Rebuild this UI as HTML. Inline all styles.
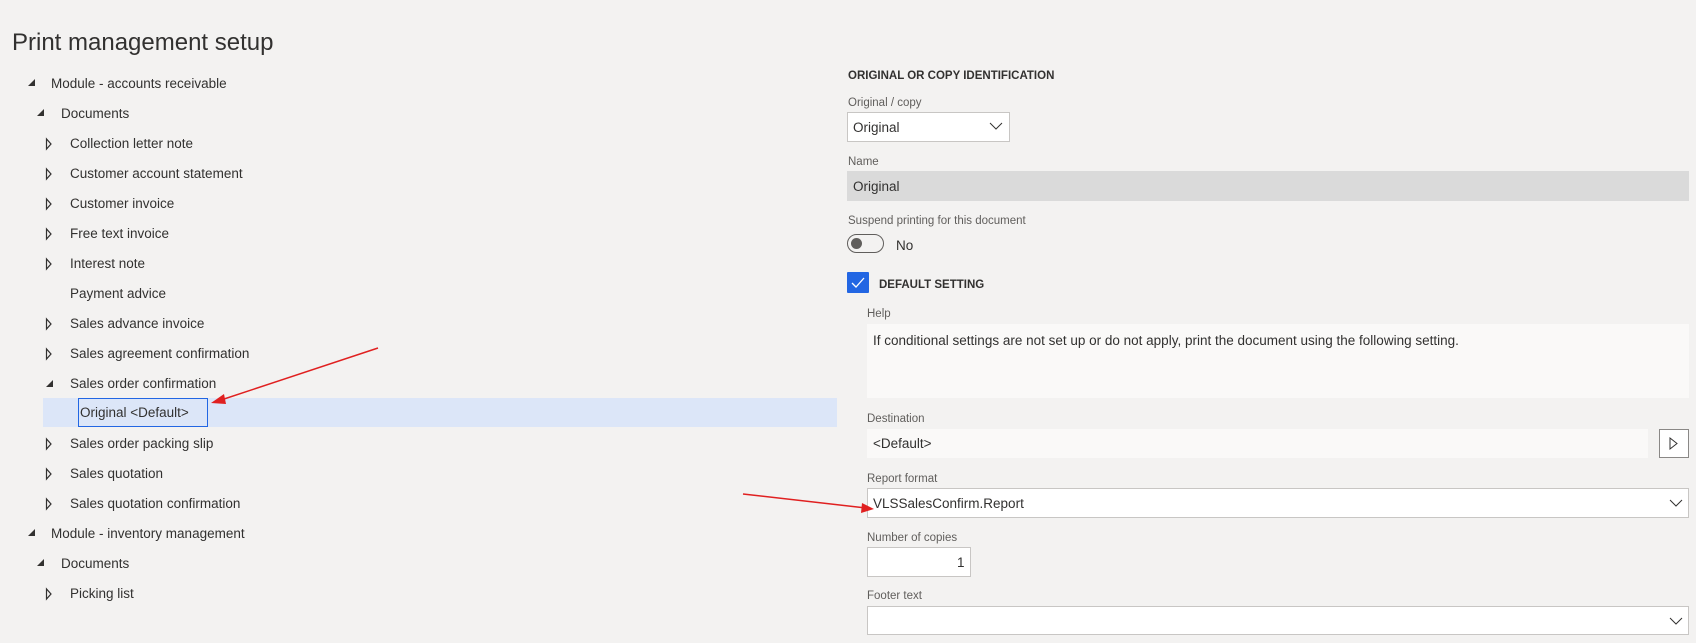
<!DOCTYPE html>
<html><head><meta charset="utf-8"><style>
*{margin:0;padding:0;box-sizing:border-box}
body{width:1696px;height:643px;background:#f3f2f1;font-family:"Liberation Sans",sans-serif;color:#323130;position:relative;overflow:hidden}
.a{position:absolute;white-space:nowrap}
.t{font-size:13.5px;line-height:16px}
.lbl{font-size:11.5px;line-height:14px;color:#605e5c}
.box{position:absolute}
</style></head><body>
<div class="a" style="left:12px;top:29px;font-size:24px;line-height:28px;color:#323130">Print management setup</div>

<svg class="a" style="left:0;top:0" width="900" height="643">
<g fill="#323130">
<polygon points="35,79 28,86 35,86"/>
<polygon points="44,109 37,116 44,116"/>
<polygon points="53,380 46,387 53,387"/>
<polygon points="35,529 28,536 35,536"/>
<polygon points="44,559 37,566 44,566"/>
</g>
<g fill="none" stroke="#323130" stroke-width="1.2">
<polygon points="46.5,139 46.5,149 51,144"/>
<polygon points="46.5,169 46.5,179 51,174"/>
<polygon points="46.5,199 46.5,209 51,204"/>
<polygon points="46.5,229 46.5,239 51,234"/>
<polygon points="46.5,259 46.5,269 51,264"/>
<polygon points="46.5,319 46.5,329 51,324"/>
<polygon points="46.5,349 46.5,359 51,354"/>
<polygon points="46.5,439 46.5,449 51,444"/>
<polygon points="46.5,469 46.5,479 51,474"/>
<polygon points="46.5,499 46.5,509 51,504"/>
<polygon points="46.5,589 46.5,599 51,594"/>
</g>
</svg>
<div class="box" style="left:43px;top:398px;width:794px;height:29px;background:#dce6f8"></div>
<div class="box" style="left:78px;top:398px;width:130px;height:29px;border:1px solid #2266e3"></div>
<div class="a t" style="left:51px;top:76px">Module - accounts receivable</div>
<div class="a t" style="left:61px;top:106px">Documents</div>
<div class="a t" style="left:70px;top:136px">Collection letter note</div>
<div class="a t" style="left:70px;top:166px">Customer account statement</div>
<div class="a t" style="left:70px;top:196px">Customer invoice</div>
<div class="a t" style="left:70px;top:226px">Free text invoice</div>
<div class="a t" style="left:70px;top:256px">Interest note</div>
<div class="a t" style="left:70px;top:286px">Payment advice</div>
<div class="a t" style="left:70px;top:316px">Sales advance invoice</div>
<div class="a t" style="left:70px;top:346px">Sales agreement confirmation</div>
<div class="a t" style="left:70px;top:376px">Sales order confirmation</div>
<div class="a t" style="left:80px;top:405px">Original &lt;Default&gt;</div>
<div class="a t" style="left:70px;top:436px">Sales order packing slip</div>
<div class="a t" style="left:70px;top:466px">Sales quotation</div>
<div class="a t" style="left:70px;top:496px">Sales quotation confirmation</div>
<div class="a t" style="left:51px;top:526px">Module - inventory management</div>
<div class="a t" style="left:61px;top:556px">Documents</div>
<div class="a t" style="left:70px;top:586px">Picking list</div>

<div class="a" style="left:848px;top:69px;font-size:11.5px;font-weight:bold;line-height:14px">ORIGINAL OR COPY IDENTIFICATION</div>
<div class="a lbl" style="left:848px;top:96px">Original / copy</div>
<div class="box" style="left:847px;top:112px;width:163px;height:30px;background:#fff;border:1px solid #c8c6c4"></div>
<div class="a t" style="left:853px;top:120px">Original</div>
<svg class="a" style="left:989px;top:121px" width="14" height="10"><path d="M1 2 L7 8 L13 2" fill="none" stroke="#323130" stroke-width="1"/></svg>
<div class="a lbl" style="left:848px;top:155px">Name</div>
<div class="box" style="left:847px;top:171px;width:842px;height:30px;background:#dadada"></div>
<div class="a t" style="left:853px;top:179px">Original</div>
<div class="a lbl" style="left:848px;top:214px">Suspend printing for this document</div>
<div class="box" style="left:847px;top:234px;width:37px;height:19px;border:1px solid #605e5c;border-radius:10px"></div>
<div class="box" style="left:851px;top:238px;width:11px;height:11px;border-radius:50%;background:#605e5c"></div>
<div class="a t" style="left:896px;top:238px">No</div>
<div class="box" style="left:847px;top:272px;width:22px;height:21px;background:#2266e3;border-radius:1px"></div>
<svg class="a" style="left:850px;top:275px" width="16" height="15"><path d="M2 8 L6 12 L14 3" fill="none" stroke="#fff" stroke-width="1.3"/></svg>
<div class="a" style="left:879px;top:278px;font-size:11.5px;font-weight:bold;line-height:14px">DEFAULT SETTING</div>
<div class="a lbl" style="left:867px;top:307px">Help</div>
<div class="box" style="left:867px;top:324px;width:822px;height:74px;background:#faf9f8"></div>
<div class="a t" style="left:873px;top:333px">If conditional settings are not set up or do not apply, print the document using the following setting.</div>
<div class="a lbl" style="left:867px;top:412px">Destination</div>
<div class="box" style="left:867px;top:429px;width:781px;height:29px;background:#faf9f8"></div>
<div class="a t" style="left:873px;top:436px">&lt;Default&gt;</div>
<div class="box" style="left:1659px;top:429px;width:30px;height:29px;border:1px solid #8a8886;background:#fff"></div>
<svg class="a" style="left:1668px;top:436px" width="12" height="15"><polygon points="2,2 2,13 9,7.5" fill="none" stroke="#323130" stroke-width="1"/></svg>
<div class="a lbl" style="left:867px;top:472px">Report format</div>
<div class="box" style="left:867px;top:488px;width:822px;height:30px;background:#fff;border:1px solid #c8c6c4"></div>
<div class="a t" style="left:873px;top:496px">VLSSalesConfirm.Report</div>
<svg class="a" style="left:1669px;top:498px" width="14" height="10"><path d="M1 2 L7 8 L13 2" fill="none" stroke="#323130" stroke-width="1"/></svg>
<div class="a lbl" style="left:867px;top:531px">Number of copies</div>
<div class="box" style="left:867px;top:547px;width:104px;height:30px;background:#fff;border:1px solid #c8c6c4"></div>
<div class="a t" style="left:957px;top:555px">1</div>
<div class="a lbl" style="left:867px;top:589px">Footer text</div>
<div class="box" style="left:867px;top:606px;width:822px;height:29px;background:#fff;border:1px solid #c8c6c4"></div>
<svg class="a" style="left:1669px;top:616px" width="14" height="10"><path d="M1 2 L7 8 L13 2" fill="none" stroke="#323130" stroke-width="1"/></svg>

<svg class="a" style="left:0;top:0" width="1696" height="643">
<line x1="378" y1="348" x2="218" y2="401" stroke="#e02020" stroke-width="1.5"/>
<polygon points="211,403 224,394 226,404" fill="#e02020"/>
<line x1="743" y1="494" x2="866" y2="508" stroke="#e02020" stroke-width="1.5"/>
<polygon points="874,509 862,503 861,513" fill="#e02020"/>
</svg>
</body></html>
